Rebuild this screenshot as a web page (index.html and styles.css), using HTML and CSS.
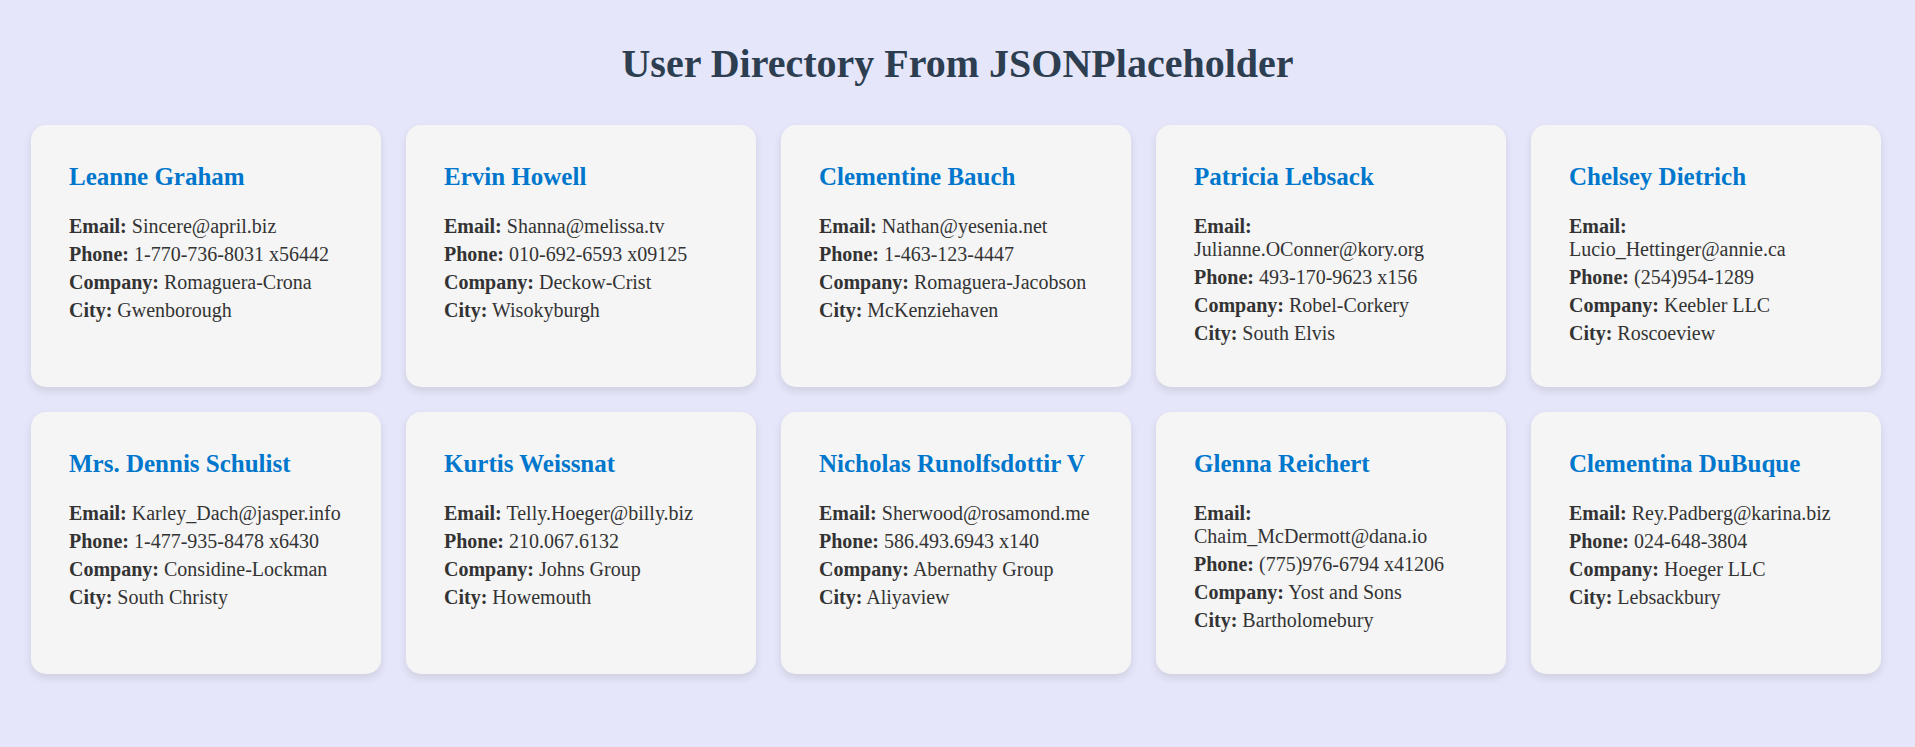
FILE: index.html
```html
<!DOCTYPE html>
<html lang="en">
<head>
<meta charset="utf-8">
<title>User Directory</title>
<link rel="stylesheet" href="styles.css">
</head>
<body>
<h1 class="title">User Directory From JSONPlaceholder</h1>
<div class="grid">
  <div class="card">
    <h2 class="name">Leanne Graham</h2>
    <p class="row"><strong>Email:</strong> Sincere@april.biz</p>
    <p class="row"><strong>Phone:</strong> 1-770-736-8031 x56442</p>
    <p class="row"><strong>Company:</strong> Romaguera-Crona</p>
    <p class="row"><strong>City:</strong> Gwenborough</p>
  </div>
  <div class="card">
    <h2 class="name">Ervin Howell</h2>
    <p class="row"><strong>Email:</strong> Shanna@melissa.tv</p>
    <p class="row"><strong>Phone:</strong> 010-692-6593 x09125</p>
    <p class="row"><strong>Company:</strong> Deckow-Crist</p>
    <p class="row"><strong>City:</strong> Wisokyburgh</p>
  </div>
  <div class="card">
    <h2 class="name">Clementine Bauch</h2>
    <p class="row"><strong>Email:</strong> Nathan@yesenia.net</p>
    <p class="row"><strong>Phone:</strong> 1-463-123-4447</p>
    <p class="row"><strong>Company:</strong> Romaguera-Jacobson</p>
    <p class="row"><strong>City:</strong> McKenziehaven</p>
  </div>
  <div class="card">
    <h2 class="name">Patricia Lebsack</h2>
    <p class="row"><strong>Email:</strong> Julianne.OConner@kory.org</p>
    <p class="row"><strong>Phone:</strong> 493-170-9623 x156</p>
    <p class="row"><strong>Company:</strong> Robel-Corkery</p>
    <p class="row"><strong>City:</strong> South Elvis</p>
  </div>
  <div class="card">
    <h2 class="name">Chelsey Dietrich</h2>
    <p class="row"><strong>Email:</strong> Lucio_Hettinger@annie.ca</p>
    <p class="row"><strong>Phone:</strong> (254)954-1289</p>
    <p class="row"><strong>Company:</strong> Keebler LLC</p>
    <p class="row"><strong>City:</strong> Roscoeview</p>
  </div>
  <div class="card">
    <h2 class="name">Mrs. Dennis Schulist</h2>
    <p class="row"><strong>Email:</strong> Karley_Dach@jasper.info</p>
    <p class="row"><strong>Phone:</strong> 1-477-935-8478 x6430</p>
    <p class="row"><strong>Company:</strong> Considine-Lockman</p>
    <p class="row"><strong>City:</strong> South Christy</p>
  </div>
  <div class="card">
    <h2 class="name">Kurtis Weissnat</h2>
    <p class="row"><strong>Email:</strong> Telly.Hoeger@billy.biz</p>
    <p class="row"><strong>Phone:</strong> 210.067.6132</p>
    <p class="row"><strong>Company:</strong> Johns Group</p>
    <p class="row"><strong>City:</strong> Howemouth</p>
  </div>
  <div class="card">
    <h2 class="name">Nicholas Runolfsdottir V</h2>
    <p class="row"><strong>Email:</strong> Sherwood@rosamond.me</p>
    <p class="row"><strong>Phone:</strong> 586.493.6943 x140</p>
    <p class="row"><strong>Company:</strong> Abernathy Group</p>
    <p class="row"><strong>City:</strong> Aliyaview</p>
  </div>
  <div class="card">
    <h2 class="name">Glenna Reichert</h2>
    <p class="row"><strong>Email:</strong> Chaim_McDermott@dana.io</p>
    <p class="row"><strong>Phone:</strong> (775)976-6794 x41206</p>
    <p class="row"><strong>Company:</strong> Yost and Sons</p>
    <p class="row"><strong>City:</strong> Bartholomebury</p>
  </div>
  <div class="card">
    <h2 class="name">Clementina DuBuque</h2>
    <p class="row"><strong>Email:</strong> Rey.Padberg@karina.biz</p>
    <p class="row"><strong>Phone:</strong> 024-648-3804</p>
    <p class="row"><strong>Company:</strong> Hoeger LLC</p>
    <p class="row"><strong>City:</strong> Lebsackbury</p>
  </div>
</div>
</body>
</html>
```
FILE: styles.css
```css
html, body {
  margin: 0;
  padding: 0;
}
body {
  background: #e6e6fa;
  font-family: "Liberation Serif", "Times New Roman", serif;
  color: #333;
}
.title {
  margin: 0;
  padding: 40px 0 38px;
  font-size: 40px;
  font-weight: bold;
  line-height: normal;
  text-align: center;
  color: #2c3e50;
}
.grid {
  display: grid;
  grid-template-columns: repeat(5, 1fr);
  gap: 25px;
  padding: 0 34px 40px 31px;
}
.card {
  background: #f5f5f5;
  border-radius: 15px;
  box-shadow: 0 4px 8px rgba(0, 0, 0, 0.1);
  padding: 38px 38px 37px;
  min-width: 0;
}
.name {
  margin: 0 0 24px;
  font-size: 25px;
  font-weight: bold;
  line-height: normal;
  color: #0077cc;
}
.row {
  margin: 5px 0;
  font-size: 20px;
  line-height: normal;
}
.row strong {
  font-weight: bold;
}
```
